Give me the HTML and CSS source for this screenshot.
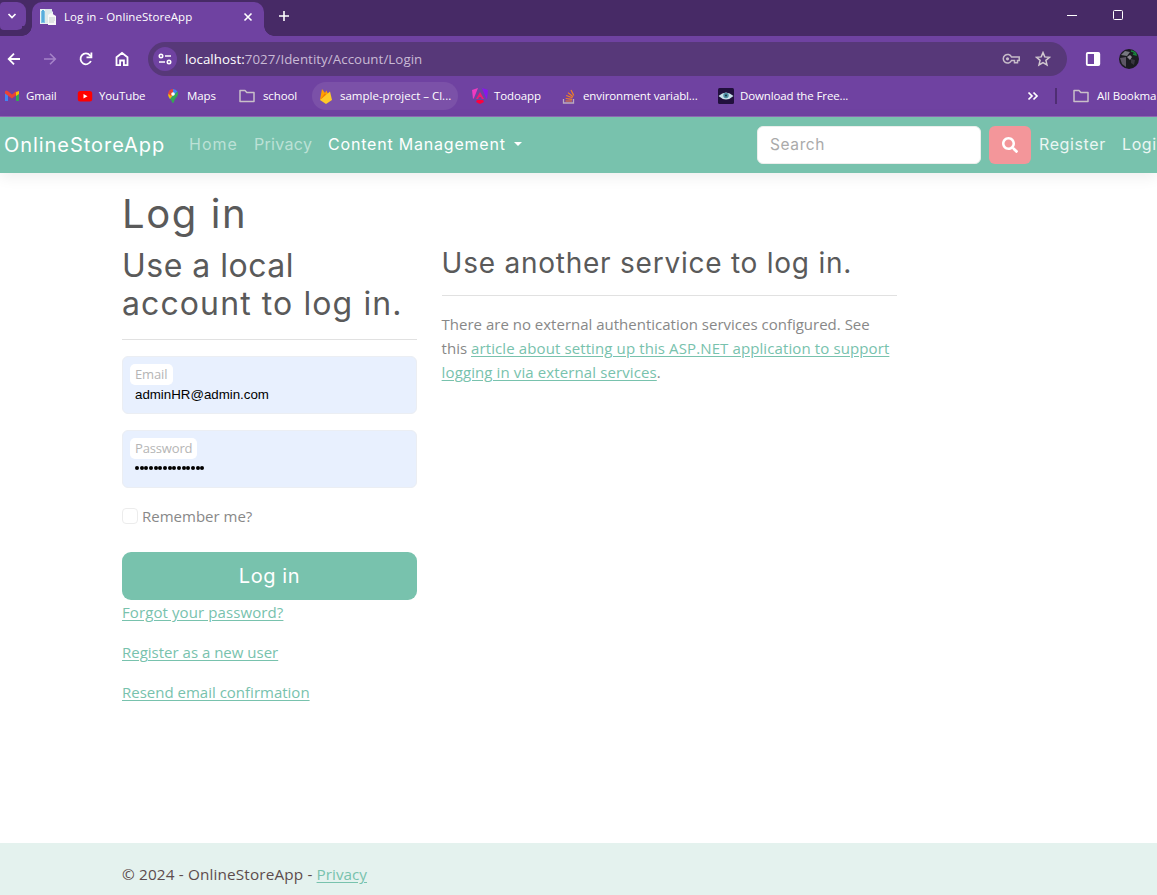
FILE: index.html
```html
<!DOCTYPE html>
<html lang="en">
<head>
<meta charset="utf-8">
<title>Log in - OnlineStoreApp</title>
<link rel="stylesheet" href="styles.css">
</head>
<body>
<div class="browser">
  <div class="tabstrip">
    <div class="tab-search"><svg width="10" height="10" viewBox="0 0 10 10"><path d="M1.5 3l3.5 3.5L8.500 3" fill="none" stroke="#fff" stroke-width="1.7"/></svg></div>
    <div class="tab">
      <svg class="favicon" width="16" height="16" viewBox="0 0 16 16"><path d="M0 0h10l3 3v12H0z" fill="#e9f3f3"/><path d="M1 2h4v12H1z" fill="#7fc2e6"/><path d="M2 1h2v12H2z" fill="#58addb"/><path d="M5 0h7v14H5z" fill="#dce9ea"/><path d="M8 6l3-2 5 3v9H8z" fill="#f8f8f8"/><path d="M9 9h6M9 11h6M9 13h5" stroke="#c4cccd"/></svg>
      <span class="tab-title">Log in - OnlineStoreApp</span>
      <svg class="tab-close" width="10" height="10" viewBox="0 0 10 10"><path d="M1.500 1.500l7 7M8.500 1.500l-7 7" stroke="#fff" stroke-width="1.6"/></svg>
    </div>
    <svg class="new-tab" width="12" height="12" viewBox="0 0 12 12"><path d="M6 1v10M1 6h10" stroke="#fff" stroke-width="1.6"/></svg>
    <div class="window-controls">
      <svg width="12" height="12" viewBox="0 0 12 12"><path d="M1 6.500h10" stroke="#fff"/></svg>
      <svg width="12" height="12" viewBox="0 0 12 12"><rect x="1.500" y="1.500" width="9" height="9" rx="1" fill="none" stroke="#fff"/></svg>
    </div>
  </div>
  <div class="toolbar">
    <div class="nav-icons">
      <svg width="16" height="16" viewBox="0 0 16 16"><path d="M14 8H3M8 2.700L2.700 8L8 13.300" fill="none" stroke="#fff" stroke-width="1.8"/></svg>
      <svg width="16" height="16" viewBox="0 0 16 16"><path d="M2 8h11M8 2.700L13.300 8L8 13.300" fill="none" stroke="#a583c8" stroke-width="1.600"/></svg>
      <svg width="16" height="16" viewBox="0 0 16 16"><path d="M12.900 10A5.400 5.400 0 1 1 12 4.300L13 5.500" fill="none" stroke="#fff" stroke-width="1.800"/><path d="M14.300 1.500v5.800H8.500V5.600h4V1.500z" fill="#fff"/></svg>
      <svg width="16" height="16" viewBox="0 0 16 16"><path d="M2.500 6.200L8 2l5.500 4.200v8H9.900V9.500H6.100v4.700H2.500z" fill="none" stroke="#fff" stroke-width="1.800"/></svg>
    </div>
    <div class="omnibox">
      <span class="site-info"><svg width="14" height="12" viewBox="0 0 14 12"><g fill="none" stroke="#fff" stroke-width="1.600"><circle cx="3" cy="3" r="1.700"/><path d="M7 3h6M1 9h6"/><circle cx="11" cy="9" r="1.700"/></g></svg></span>
      <span class="url"><b>localhost:</b>7027/Identity/Account/Login</span>
      <svg class="key" width="18" height="12" viewBox="0 0 18 12"><path d="M9.500 4h7.700v3.500h-1.700v2.200h-3V7.500h-3a4.300 4.300 0 1 1 0-3.500z" fill="none" stroke="#c7bcc9" stroke-width="1.500"/><circle cx="5.500" cy="5.800" r="1.600" fill="#c7bcc9"/></svg>
      <svg width="16" height="16" viewBox="0 0 16 16"><path d="M8 1.600l1.800 4.300 4.700.4-3.600 3 1.100 4.600L8 11.500l-4 2.400 1.100-4.600-3.600-3 4.700-.4z" fill="none" stroke="#d1c8cf" stroke-width="1.500"/></svg>
    </div>
    <svg class="side-panel" width="16" height="16" viewBox="0 0 16 16"><rect x="1.800" y="2" width="12.500" height="12" rx="1" fill="none" stroke="#fff" stroke-width="1.800"/><path d="M9 2h5.500v12H9z" fill="#fff"/></svg>
    <svg class="avatar" width="20" height="20" viewBox="0 0 20 20"><circle cx="10" cy="10" r="10" fill="#1b1b21"/><path d="M2 6l4-4 5 1-3 4z" fill="#777880"/><path d="M1 9l6-1v10l-4-3z" fill="#5d5665"/><path d="M8 8l3-2 2 2-2 3z" fill="#8b8792"/><path d="M12 10l4 1-1 5-3-2z" fill="#393641"/><path d="M12 2q5 1 5 4l-3-1" fill="none" stroke="#19833c" stroke-width="1.500"/></svg>
  </div>
  <div class="bookmarks">
    <div class="bookmark"><svg width="16" height="16" viewBox="0 0 16 16"><path d="M1 4v9h3V7z" fill="#4285f4"/><path d="M12 7v6h3V4z" fill="#34a853"/><path d="M12 4l3-1v3l-3 2z" fill="#fbbc04"/><path d="M1 3.500Q2.500 1.800 4 3.300L8 6.500l4-3.200v4L8 10.500 1 5.500z" fill="#ea4335"/></svg><span>Gmail</span></div>
    <div class="bookmark"><svg width="16" height="16" viewBox="0 0 16 16"><rect x=".8" y="3" width="14.400" height="10.500" rx="2.500" fill="#f00"/><path d="M6.500 6v4.500l4-2.200z" fill="#fff"/></svg><span>YouTube</span></div>
    <div class="bookmark"><svg width="16" height="16" viewBox="0 0 16 16"><path d="M8 1a5.300 5.300 0 0 0-4 1.800L8 6z" fill="#ea4335"/><path d="M8 1a5.300 5.300 0 0 1 4.500 2.500L5 11 3.500 9 8 5z" fill="#4285f4"/><path d="M12.500 3.500c1.600 3-.7 5.500-2.200 7.200C9 12.500 9 15 8 15s-1-2.500-3-4z" fill="#34a853"/><path d="M3.200 5.500Q2.600 8 5 11l3-4z" fill="#fbbc04"/><path d="M4 2.800L3.200 5.500 6 8l2-2z" fill="#ea4335"/><circle cx="8" cy="6" r="1.800" fill="#fff"/></svg><span>Maps</span></div>
    <div class="bookmark"><svg width="16" height="16" viewBox="0 0 16 16"><path d="M1 2.500h5l1.800 2H15v9H1z" fill="none" stroke="#c9c0c9" stroke-width="1.500" stroke-linejoin="round"/></svg><span>school</span></div>
    <div class="bookmark active"><svg width="16" height="16" viewBox="0 0 16 16"><path d="M2 12L4 1l3 4 1.300-2.500L13 12z" fill="#ffa000"/><path d="M2 12l5-7 2 4z" fill="#f57c00"/><path d="M2 12L12 3.500l2 8.500-6 4z" fill="#ffca28"/></svg><span>sample-project – Cl...</span></div>
    <div class="bookmark"><svg width="16" height="16" viewBox="0 0 16 16"><path d="M0 2l6-2-4 10-1 1z" fill="#f13ac1"/><path d="M10 0l6 2-1 9-1-1z" fill="#8616ed"/><path d="M8 4l4 7h-2.200L9 9H7l-.8 2H4z" fill="#f51a72"/><path d="M5 12h6l1 2-4 2-4-2z" fill="#ff003c"/></svg><span>Todoapp</span></div>
    <div class="bookmark"><svg width="16" height="16" viewBox="0 0 16 16"><path d="M2.500 11v4h10v-4" fill="none" stroke="#bcaabd" stroke-width="1.300"/><path d="M4.500 13h6.500M4.700 10.500l6.500.8M5.200 7.500l6.300 2.300M7 4.600l5 4.200M10 2l2.800 5.500" stroke="#f48024" stroke-width="1.200"/></svg><span>environment variabl...</span></div>
    <div class="bookmark"><svg width="16" height="16" viewBox="0 0 16 16"><rect width="16" height="16" rx="1.500" fill="#21103d"/><path d="M.5 8q7.500-7 15 0-7.500 7-15 0z" fill="#c9e2ea"/><circle cx="8" cy="7.500" r="2.700" fill="#4d8ea4"/><circle cx="8" cy="7.500" r="1" fill="#162d3a"/></svg><span>Download the Free...</span></div>
    <svg class="more" width="12" height="12" viewBox="0 0 12 12"><path d="M1.500 2.500L5 6 1.500 9.500M6.500 2.500L10 6 6.500 9.500" fill="none" stroke="#fff" stroke-width="1.700"/></svg>
    <i class="separator"></i>
    <div class="bookmark"><svg width="16" height="16" viewBox="0 0 16 16"><path d="M1 2.500h5l1.800 2H15v9H1z" fill="none" stroke="#c9c0c9" stroke-width="1.500" stroke-linejoin="round"/></svg><span>All Bookma</span></div>
  </div>
</div>

<header class="navbar">
  <a class="brand">OnlineStoreApp</a>
  <a class="link home">Home</a>
  <a class="link privacy">Privacy</a>
  <a class="link dropdown">Content Management<i class="caret"></i></a>
  <div class="search">Search</div>
  <button class="search-button"><svg width="16" height="16" viewBox="0 0 512 512"><path fill="#fff" d="M505 442.700L405.300 343c-4.500-4.500-10.600-7-17-7H372c27.600-35.300 44-79.700 44-128C416 93.100 322.900 0 208 0S0 93.100 0 208s93.100 208 208 208c48.300 0 92.700-16.400 128-44v16.300c0 6.400 2.500 12.500 7 17l99.700 99.700c9.400 9.400 24.600 9.400 33.900 0l28.300-28.300c9.400-9.400 9.400-24.600.1-34zM208 336c-70.700 0-128-57.200-128-128 0-70.700 57.200-128 128-128 70.700 0 128 57.200 128 128 0 70.700-57.200 128-128 128z"/></svg></button>
  <a class="link register">Register</a>
  <a class="link login">Logi</a>
</header>

<main class="content">
  <h1>Log in</h1>
  <div class="columns">
    <section class="local">
      <h2><span class="first-line">Use a local</span><br>account to log in.</h2>
      <hr>
      <div class="field"><label class="email-label">Email</label><div class="value">adminHR@admin.com</div></div>
      <div class="field"><label class="password-label">Password</label><div class="dots"><i></i><i></i><i></i><i></i><i></i><i></i><i></i><i></i><i></i><i></i><i></i><i></i><i></i><i></i><i></i></div></div>
      <div class="remember"><i class="checkbox"></i><span>Remember me?</span></div>
      <button class="submit">Log in</button>
      <p><a class="forgot">Forgot your password?</a></p>
      <p><a class="new-user">Register as a new user</a></p>
      <p><a class="resend">Resend email confirmation</a></p>
    </section>
    <section class="external">
      <h3>Use another service to log in.</h3>
      <hr>
      <p>There are no external authentication services configured. See<br>this <a>article about setting up this ASP.NET application to support</a><br><a>logging in via external services</a>.</p>
    </section>
  </div>
</main>

<footer class="footer"><span>© 2024 - OnlineStoreApp - <a>Privacy</a></span></footer>
</body>
</html>
```
FILE: styles.css
```css
* { box-sizing: border-box; }
body {
  margin: 0;
  width: 1157px;
  height: 895px;
  overflow: hidden;
  display: flex;
  flex-direction: column;
  background: #fff;
  color: #888;
  font: 15px/24px "Open Sans", sans-serif;
  letter-spacing: 0;
}
svg { display: block; flex: none; }
button { border: 0; padding: 0; }

/* Browser frame */
.browser {
  flex: none;
  height: 117px;
  background: #6f42a1;
  border-bottom: 1px solid #9069b4;
  color: #fff;
  font-size: 11.5px;
  letter-spacing: -.12px;
}
.tabstrip { height: 36px; display: flex; background: #472a66; }
.tab-search {
  width: 26px;
  height: 28px;
  margin-top: 2px;
  padding-left: 7px;
  display: flex;
  align-items: center;
  background: #6f42a1;
  border-radius: 4px 9px 9px 4px;
}
.tab {
  position: relative;
  width: 232px;
  height: 34px;
  margin: 2px 0 0 6px;
  padding: 0 11px 5px 8px;
  display: flex;
  align-items: center;
  background: #6f42a1;
  border-radius: 10px 10px 0 0;
}
.tab::before, .tab::after { content: ""; position: absolute; bottom: 0; width: 10px; height: 10px; }
.tab::before { left: -10px; background: radial-gradient(circle at 0 0, #472a66 9.5px, #6f42a1 10px); }
.tab::after { right: -10px; background: radial-gradient(circle at 100% 0, #472a66 9.5px, #6f42a1 10px); }
.tab-title { margin-left: 8px; white-space: nowrap; letter-spacing: .06px; }
.tab-close { margin-left: auto; }
.new-tab { margin: 10px 0 0 14px; }
.window-controls { display: flex; gap: 34px; margin: 9px 33px 0 auto; }
.toolbar { height: 46px; display: flex; align-items: center; padding-left: 6px; }
.nav-icons { display: flex; gap: 20px; }
.omnibox {
  width: 919px;
  height: 34px;
  margin-left: 18px;
  padding: 0 16px 0 5px;
  display: flex;
  align-items: center;
  border-radius: 17px;
  background: #573879;
}
.site-info { width: 24px; height: 24px; border-radius: 50%; background: #6f42a1; display: grid; place-items: center; }
.url { margin-left: 8px; color: #c9bad5; font-size: 13.3px; letter-spacing: .06px; }
.url b { color: #fff; font-weight: 400; }
.key { margin: 0 15px 0 auto; }
.side-panel { margin-left: 18px; }
.avatar { margin-left: 18px; }
.bookmarks {
  height: 28px;
  display: grid;
  grid-template-columns: 73px 88px 74px 73px 160px 89px 157px 310px 27px 18px 84px;
  align-items: center;
  padding-left: 4px;
}
.bookmark { height: 28px; display: flex; align-items: center; gap: 6px; white-space: nowrap; }
.bookmark:nth-child(4) { gap: 8px; }
.bookmark:last-child { gap: 8px; letter-spacing: -.1px; }
.bookmark.active { width: 146px; padding-left: 6px; border-radius: 14px; background: #7b51a8; letter-spacing: 0; }
.more { margin-left: -1px; }
.separator { width: 2px; height: 16px; background: #4f2e73; }

/* Site navigation */
.navbar {
  flex: none;
  height: 56px;
  padding-left: 4px;
  display: flex;
  align-items: center;
  background: #78c2ad;
  box-shadow: 0 4px 14px rgba(0, 0, 0, .07);
  color: #fff;
  font-family: Inter, sans-serif;
  font-size: 16px;
  letter-spacing: .6px;
  white-space: nowrap;
}
.link { padding-bottom: 2px; }
.brand { width: 185px; font-size: 20px; letter-spacing: .95px; }
.home { width: 65px; color: #bce1d6; letter-spacing: 1px; }
.privacy { width: 74px; color: #bce1d6; letter-spacing: .3px; }
.dropdown { display: flex; align-items: center; letter-spacing: .8px; }
.caret { margin-left: 8px; border: 4px solid transparent; border-top-color: #fff; border-bottom: 0; }
.search {
  width: 224px;
  height: 38px;
  margin-left: auto;
  padding: 6px 12px;
  border: 1px solid #eceeec;
  border-radius: 6px;
  background: #fff;
  color: #aaa;
  font-size: 15.5px;
}
.search-button { width: 42px; height: 38px; margin: 0 8px; border-radius: 6px; background: #f3969a; display: grid; place-items: center; }
.register { width: 83px; }
.register, .login { color: #ebf6f3; }
.login { width: 35px; }

/* Login page */
.content { flex: 1; padding: 17px 0 0 122px; }
h1, h2, h3 { margin: 0; color: #5a5a5a; font-family: Inter, sans-serif; font-weight: 400; white-space: nowrap; }
h1 { font-size: 40px; line-height: 48px; letter-spacing: 1.600px; }
.columns { display: grid; grid-template-columns: 295px 455px; column-gap: 25px; margin-top: 8px; }
h2 { padding-top: 1px; font-size: 32px; line-height: 38px; letter-spacing: 1.100px; }
h2 .first-line { letter-spacing: .5px; }
h3 { padding-top: 1px; font-size: 28px; line-height: 33px; letter-spacing: .760px; }
hr { height: 1px; margin: 16px 0; border: 0; background: #e1e1e1; }
.external hr { margin-top: 15px; }
.external { margin-left: -.4px; }
.field {
  height: 58px;
  margin-bottom: 16px;
  padding: 7px;
  border: 1px solid #ebeef3;
  border-radius: 6px;
  background: #e8f0fe;
}
.field label {
  display: block;
  width: 43px;
  height: 21px;
  padding-left: 5px;
  border-radius: 5px;
  background: #fff;
  color: #b5b5b5;
  font-size: 13px;
  line-height: 20px;
  letter-spacing: -.15px;
}
.field .password-label { width: 67px; }
.value { padding-left: 5px; color: #000; font: 13.33px/19px "Liberation Sans", sans-serif; letter-spacing: -.02px; }
.dots { display: flex; gap: .67px; padding: 7px 0 0 5px; }
.dots i { width: 4px; height: 4px; border-radius: 50%; background: #000; }
.remember { height: 24px; display: flex; align-items: center; gap: 4px; }
.checkbox { width: 16px; height: 16px; border: 1px solid #ececec; border-radius: 4px; }
.submit {
  display: block;
  width: 295px;
  height: 48px;
  margin-top: 24px;
  border-radius: 9px;
  background: #78c2ad;
  color: #fff;
  font: 20px/48px Inter, sans-serif;
  letter-spacing: .6px;
}
p { margin: 0 0 16px; white-space: nowrap; }
p a, .footer a { color: #78c2ad; text-decoration: underline; text-underline-offset: 2px; }
.local p { letter-spacing: 0; }
.local .forgot { letter-spacing: .1px; }
.external a { letter-spacing: .110px; }
.footer { flex: none; height: 52px; padding: 19px 0 0 122px; background: #e4f2ee; color: #5d4c4c; font-size: 15.3px; letter-spacing: .150px; }
.footer a { letter-spacing: 0; }
```
